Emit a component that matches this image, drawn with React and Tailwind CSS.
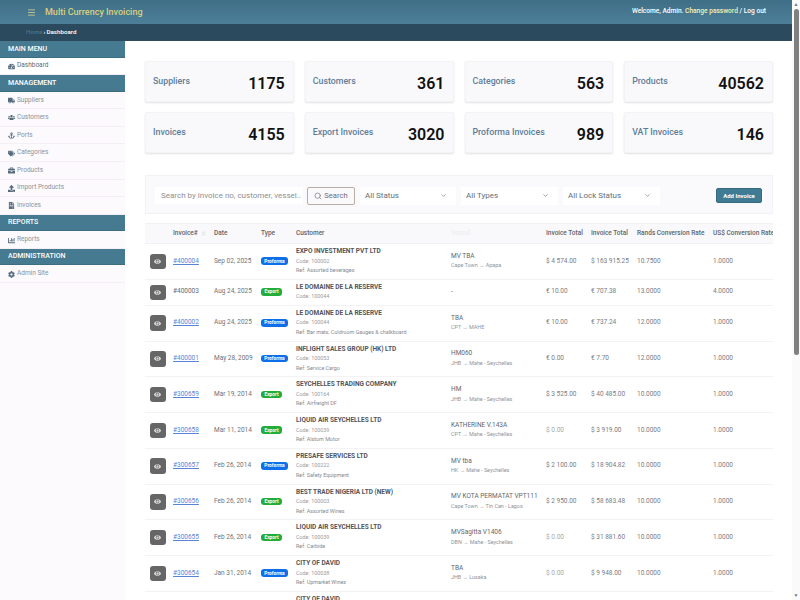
import React from 'react';
import { FaTachometerAlt, FaTruck, FaUsers, FaAnchor, FaTags, FaBriefcase, FaUpload, FaFileInvoice, FaChartBar, FaCog, FaEye } from 'react-icons/fa';
import { Menu, Search, ChevronDown, ChevronsUpDown } from 'lucide-react';

const stats = [
    ['Suppliers', '1175'],
    ['Customers', '361'],
    ['Categories', '563'],
    ['Products', '40562'],
    ['Invoices', '4155'],
    ['Export Invoices', '3020'],
    ['Proforma Invoices', '989'],
    ['VAT Invoices', '146'],
];

const rows = [
    { no: '#400004', link: true, date: 'Sep 02, 2025', type: 'Proforma', name: 'EXPO INVESTMENT PVT LTD', code: '100002', ref: 'Assorted beverages', vessel: 'MV TBA', route: 'Cape Town → Apapa', t1: '$ 4 574.00', t2: '$ 163 915.25', rands: '10.7500', usd: '1.0000' },
    { no: '#400003', link: false, date: 'Aug 24, 2025', type: 'Export', name: 'LE DOMAINE DE LA RESERVE', code: '100044', vessel: '-', t1: '€ 10.00', t2: '€ 707.38', rands: '13.0000', usd: '4.0000', short: true },
    { no: '#400002', link: true, date: 'Aug 24, 2025', type: 'Proforma', name: 'LE DOMAINE DE LA RESERVE', code: '100044', ref: 'Bar mats, Coldroom Gauges & chalkboard', vessel: 'TBA', route: 'CPT → MAHE', t1: '€ 10.00', t2: '€ 737.24', rands: '12.0000', usd: '1.0000' },
    { no: '#400001', link: true, date: 'May 28, 2009', type: 'Proforma', name: 'INFLIGHT SALES GROUP (HK) LTD', code: '100053', ref: 'Service Cargo', vessel: 'HM060', route: 'JHB → Mahe - Seychelles', t1: '€ 0.00', t2: '€ 7.70', rands: '12.0000', usd: '1.0000' },
    { no: '#300659', link: true, date: 'Mar 19, 2014', type: 'Export', name: 'SEYCHELLES TRADING COMPANY', code: '100164', ref: 'Airfreight DF', vessel: 'HM', route: 'JHB → Mahe - Seychelles', t1: '$ 3 525.00', t2: '$ 40 485.00', rands: '10.0000', usd: '1.0000' },
    { no: '#300658', link: true, date: 'Mar 11, 2014', type: 'Export', name: 'LIQUID AIR SEYCHELLES LTD', code: '100039', ref: 'Alstom Motor', vessel: 'KATHERINE V.143A', route: 'CPT → Mahe - Seychelles', t1: '$ 0.00', t2: '$ 3 919.00', rands: '10.0000', usd: '1.0000', muted: true },
    { no: '#300657', link: true, date: 'Feb 26, 2014', type: 'Proforma', name: 'PRESAFE SERVICES LTD', code: '100222', ref: 'Safety Equipment', vessel: 'MV tba', route: 'HK → Mahe - Seychelles', t1: '$ 2 100.00', t2: '$ 18 904.82', rands: '10.0000', usd: '1.0000' },
    { no: '#300656', link: true, date: 'Feb 26, 2014', type: 'Export', name: 'BEST TRADE NIGERIA LTD (NEW)', code: '100003', ref: 'Assorted Wines', vessel: 'MV KOTA PERMATAT VPT111', route: 'Cape Town → Tin Can - Lagos', t1: '$ 2 950.00', t2: '$ 58 683.48', rands: '10.0000', usd: '1.0000' },
    { no: '#300655', link: true, date: 'Feb 26, 2014', type: 'Export', name: 'LIQUID AIR SEYCHELLES LTD', code: '100039', ref: 'Carbide', vessel: 'MVSagitta V1406', route: 'DBN → Mahe - Seychelles', t1: '$ 0.00', t2: '$ 31 881.60', rands: '10.0000', usd: '1.0000', muted: true },
    { no: '#300654', link: true, date: 'Jan 31, 2014', type: 'Proforma', name: 'CITY OF DAVID', code: '100038', ref: 'Upmarket Wines', vessel: 'TBA', route: 'JHB → Lusaka', t1: '$ 0.00', t2: '$ 9 948.00', rands: '10.0000', usd: '1.0000', muted: true },
    { no: '#300653', link: true, date: 'Jan 31, 2014', type: 'Proforma', name: 'CITY OF DAVID', code: '100038', ref: 'Upmarket Wines', vessel: 'TBA', route: 'JHB → Lusaka', t1: '$ 0.00', t2: '$ 9 948.00', rands: '10.0000', usd: '1.0000', muted: true },
];

const SectionHead = ({ children }) => (
    <div className="h-[16.5px] flex items-center pl-[8px] bg-[#457a90] border-b border-[#3d6d82] text-white text-[7px] font-medium">{children}</div>
);

const NavItem = ({ icon: Icon, label, active }) => (
    <div className={`h-[17.6px] flex items-center gap-[2px] pl-[8px] pt-[1px] border-b border-[#f3eff4] text-[6.5px] ${active ? 'bg-white text-[#5f6972]' : 'text-[#8a9199]'}`}>
        <Icon className="w-[7px] h-[7px] text-[#566b7c] shrink-0" />
        <span>{label}</span>
    </div>
);

const Select = ({ label, className }) => (
    <div className={`h-[18px] bg-white flex items-center justify-between pl-[5px] pr-[9px] text-[8px] text-[#666d75] ${className}`}>
        <span>{label}</span>
        <ChevronDown className="w-[7px] h-[7px] text-[#666]" />
    </div>
);

const TypeBadge = ({ type }) => (
    <span className={`inline-flex items-center justify-center h-[7.5px] rounded-[3px] text-white text-[4.8px] font-bold ${type === 'Export' ? 'w-[21px] bg-[#22ad3a]' : 'w-[27px] bg-[#0f6fe8]'}`}>{type}</span>
);

const InvoiceRow = ({ row }) => (
    <tr className={`border-b border-[#f3f2f5] ${row.short ? 'h-[26px]' : 'h-[35.75px]'}`}>
        <td className="pl-[5px]">
            <button className="w-[15.5px] h-[15.5px] rounded-[3px] bg-[#666666] flex items-center justify-center">
                <FaEye className="w-[7px] h-[7px] text-[#dcdcdc]" />
            </button>
        </td>
        <td className={row.link ? 'text-[#5a84d8] underline' : 'text-[#666a70]'}>{row.no}</td>
        <td className="text-[#6e7278]">{row.date}</td>
        <td><TypeBadge type={row.type} /></td>
        <td className="align-middle">
            <div className="font-bold text-[#51565c] text-[6.5px] leading-[9.5px]">{row.name}</div>
            <div className="text-[#979ba1] text-[5.4px] leading-[9.5px]">Code: {row.code}</div>
            {row.ref && <div className="text-[#85898f] text-[5.4px] leading-[9.5px]">Ref: {row.ref}</div>}
        </td>
        <td className="align-middle">
            <div className="text-[#63676d] leading-[9.5px] whitespace-nowrap">{row.vessel}</div>
            {row.route && <div className="text-[#8f9399] text-[5.4px] leading-[9.5px] whitespace-nowrap">{row.route}</div>}
        </td>
        <td className={row.muted ? 'text-[#a5a8ad]' : 'text-[#787c82]'}>{row.t1}</td>
        <td className="text-[#787c82] whitespace-nowrap">{row.t2}</td>
        <td className="text-[#787c82]">{row.rands}</td>
        <td className="text-[#787c82]">{row.usd}</td>
    </tr>
);

const App = () => {
    return (
        <div className="h-screen flex overflow-hidden bg-white font-['Roboto',sans-serif]">
            <div className="flex-1 min-w-0 flex flex-col">
                <header className="h-[24px] shrink-0 flex items-center justify-between pl-[27px] pr-[26px] bg-gradient-to-b from-[#3f6f87] to-[#4d7f98]">
                    <div className="flex items-center gap-[9px]">
                        <Menu className="w-[9px] h-[9px] text-[#e4d98c]" />
                        <span className="pt-[1px] text-[9px] font-medium text-[#d9cf7e]">Multi Currency Invoicing</span>
                    </div>
                    <div className="text-[6.6px] font-medium text-white">
                        Welcome, Admin. <span className="text-[#f2f2b8]">Change password</span> / Log out
                    </div>
                </header>
                <div className="h-[17px] shrink-0 flex items-center pl-[26px] bg-[#2b4a5e] text-[6.2px] font-medium text-white">
                    <span className="text-[#4f7488]">Home</span>
                    <span className="mx-[1px]">›</span>
                    <span>Dashboard</span>
                </div>
                <div className="flex-1 min-h-0 flex">
                    <aside className="w-[125px] shrink-0 bg-[#fcfafd]">
                        <SectionHead>MAIN MENU</SectionHead>
                        <NavItem icon={FaTachometerAlt} label="Dashboard" active />
                        <SectionHead>MANAGEMENT</SectionHead>
                        <NavItem icon={FaTruck} label="Suppliers" />
                        <NavItem icon={FaUsers} label="Customers" />
                        <NavItem icon={FaAnchor} label="Ports" />
                        <NavItem icon={FaTags} label="Categories" />
                        <NavItem icon={FaBriefcase} label="Products" />
                        <NavItem icon={FaUpload} label="Import Products" />
                        <NavItem icon={FaFileInvoice} label="Invoices" />
                        <SectionHead>REPORTS</SectionHead>
                        <NavItem icon={FaChartBar} label="Reports" />
                        <SectionHead>ADMINISTRATION</SectionHead>
                        <NavItem icon={FaCog} label="Admin Site" />
                    </aside>
                    <main className="flex-1 min-w-0 pt-[20px] pl-[20px] pr-[19px] overflow-hidden">
                        <div className="grid grid-cols-4 gap-x-[11px] gap-y-[10px]">
                            {stats.map(([label, value]) => (
                                <div key={label} className="h-[41px] bg-[#f9f9fc] rounded-[2px] border border-[#f3f3f6] shadow-[0_1px_2px_rgba(0,0,0,0.12)] flex justify-between pl-[7px] pr-[8px]">
                                    <span className="mt-[14px] text-[8.8px] leading-[11px] font-medium text-[#5d7d98] whitespace-nowrap">{label}</span>
                                    <span className="mt-[12px] text-[16px] leading-[19px] font-semibold text-[#111]">{value}</span>
                                </div>
                            ))}
                        </div>
                        <div className="mt-[22px] h-[39px] flex items-center pt-[2px] pl-[9px] pr-[10px] bg-[#faf9fc] border border-[#f2f1f5]">
                            <div className="w-[148px] h-[17px] bg-white flex items-center pl-[6px] text-[8px] text-[#8b8f95] whitespace-nowrap overflow-hidden">Search by invoice no, customer, vessel..</div>
                            <button className="ml-[4px] w-[48px] h-[18px] flex items-center justify-center gap-[2px] rounded-[2px] border border-[#b9aea5] text-[7.6px] text-[#6c7076]">
                                <Search className="w-[8px] h-[8px]" />
                                Search
                            </button>
                            <Select label="All Status" className="ml-[5px] w-[96px]" />
                            <Select label="All Types" className="ml-[5px] w-[97px]" />
                            <Select label="All Lock Status" className="ml-[5px] w-[97px]" />
                            <button className="ml-auto w-[46px] h-[15px] rounded-[2px] bg-[#3f7c94] border border-[#356a80] text-white text-[6px] font-bold">Add Invoice</button>
                        </div>
                        <div className="mt-[9px] overflow-hidden">
                            <table className="w-[638px] table-fixed border-collapse text-[6.5px]">
                                <colgroup>
                                    <col className="w-[28px]" />
                                    <col className="w-[41px]" />
                                    <col className="w-[47px]" />
                                    <col className="w-[35px]" />
                                    <col className="w-[155px]" />
                                    <col className="w-[95px]" />
                                    <col className="w-[45px]" />
                                    <col className="w-[46px]" />
                                    <col className="w-[76px]" />
                                    <col className="w-[70px]" />
                                </colgroup>
                                <thead>
                                    <tr className="h-[20px] bg-[#f9f8fb] border-y border-[#f1f0f4] text-left text-[6.5px] font-medium text-[#60656b] whitespace-nowrap">
                                        <th className="font-medium"></th>
                                        <th className="font-medium">
                                            <span className="inline-flex items-center gap-[3px]">Invoice# <ChevronsUpDown className="w-[5px] h-[5px] text-[#aaa]" /></span>
                                        </th>
                                        <th className="font-medium">Date</th>
                                        <th className="font-medium">Type</th>
                                        <th className="font-medium">Customer</th>
                                        <th className="font-medium text-[#eeeef2]">Vessel</th>
                                        <th className="font-medium">Invoice Total</th>
                                        <th className="font-medium">Invoice Total</th>
                                        <th className="font-medium">Rands Conversion Rate</th>
                                        <th className="font-medium">US$ Conversion Rate</th>
                                    </tr>
                                </thead>
                                <tbody>
                                    {rows.map((row) => (
                                        <InvoiceRow key={row.no} row={row} />
                                    ))}
                                </tbody>
                            </table>
                        </div>
                    </main>
                </div>
            </div>
            <div className="w-[8px] shrink-0 bg-[#fafafa] flex flex-col items-center">
                <div className="h-[9px] text-[5px] leading-[9px] text-[#777]">▲</div>
                <div className="w-[5px] h-[346px] rounded-[3px] bg-[#808080]"></div>
                <div className="mt-auto h-[9px] text-[5px] leading-[9px] text-[#777]">▼</div>
            </div>
        </div>
    );
};

export default App;
